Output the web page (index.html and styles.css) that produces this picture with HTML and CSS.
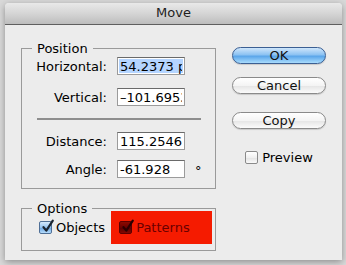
FILE: index.html
```html
<!DOCTYPE html>
<html>
<head>
<meta charset="utf-8">
<link rel="stylesheet" href="styles.css">
</head>
<body>
<div class="window">
  <div class="titlebar">Move</div>
  <div class="content">
    <div class="left">
      <fieldset class="group position">
        <legend>Position</legend>
        <div class="row r1"><label>Horizontal:</label><input class="field selected" value="54.2373 pt"></div>
        <div class="row r2"><label>Vertical:</label><input class="field" value="–101.6953 pt"></div>
        <div class="sep"></div>
        <div class="row r3"><label>Distance:</label><input class="field" value="115.2546 pt"></div>
        <div class="row r4"><label>Angle:</label><input class="field" value="-61.928"><span class="deg">°</span></div>
      </fieldset>
      <fieldset class="group options">
        <legend>Options</legend>
        <div class="optrow">
          <span class="check blue"><svg width="16" height="16" viewBox="0 0 16 16"><path d="M3.5 8.2 L6.3 11.6 L12.8 1.6" fill="none" stroke="#1c2530" stroke-width="2.2" stroke-linecap="round" stroke-linejoin="round"/></svg></span>
          <span class="opt">Objects</span>
          <div class="mark">
            <span class="check red"><svg width="16" height="16" viewBox="0 0 16 16"><path d="M3.5 8.2 L6.3 11.6 L12.8 1.6" fill="none" stroke="#2a0000" stroke-width="2.2" stroke-linecap="round" stroke-linejoin="round"/></svg></span>
            <span class="opt redtext">Patterns</span>
          </div>
        </div>
      </fieldset>
    </div>
    <div class="right">
      <button class="btn ok">OK</button>
      <button class="btn cancel">Cancel</button>
      <button class="btn copy">Copy</button>
      <div class="preview"><span class="check plain"></span><span class="opt">Preview</span></div>
    </div>
  </div>
</div>
</body>
</html>
```
FILE: styles.css
```css
html, body {
  margin: 0;
  padding: 0;
}
body {
  background: #d9d9d9;
  width: 346px;
  height: 265px;
  overflow: hidden;
  font-family: "DejaVu Sans", sans-serif;
  font-size: 13px;
  color: #000;
}
.window {
  margin: 3px 0 0 5px;
  width: 337px;
  height: 257px;
  background: #ececec;
  box-shadow: 0 2px 7px rgba(0,0,0,0.35);
  border-radius: 4px 4px 0 0;
  overflow: hidden;
}
.titlebar {
  height: 21px;
  line-height: 20px;
  text-align: center;
  color: #1e1e1e;
  background: linear-gradient(#e9e9e9, #d5d5d5 50%, #bdbdbd);
  border-bottom: 1px solid #5f5f5f;
}
.content {
  display: flex;
  gap: 16px;
  padding: 16px 16px 0 16px;
}
.left {
  width: 195px;
  display: flex;
  flex-direction: column;
  gap: 12px;
}
.group {
  margin: 0;
  border: 1px solid #9a9a9a;
  padding: 1px 0 10px 0;
  min-width: 0;
}
.group legend {
  margin-left: 10px;
  padding: 0 5px;
  line-height: 15px;
  height: 15px;
}
.row {
  display: flex;
  align-items: center;
  height: 18px;
}
.row label {
  width: 85px;
  text-align: right;
  margin-right: 10px;
}
.r2 { margin-top: 13px; }
.r3 { margin-top: 12px; }
.r4 { margin-top: 10px; }
.sep {
  margin: 12px 14px 0 15px;
  height: 2px;
  background: #8e8e8e;
}
.field {
  width: 68px;
  height: 18px;
  box-sizing: border-box;
  border: 1px solid #9b9b9b;
  border-top-color: #6a6a6a;
  padding: 0 2px;
  margin: 0;
  font-family: "DejaVu Sans", sans-serif;
  font-size: 13px;
  color: #000;
  background: #fff;
  outline: none;
}
.field.selected {
  background: #b5d5ff;
  box-shadow: inset 0 0 0 1px #fff;
}
.deg {
  margin-left: 10px;
  font-size: 13px;
  position: relative;
  top: 1px;
}
.options {
  padding-bottom: 15px;
}
.optrow {
  display: flex;
  align-items: center;
  height: 15px;
  margin-top: 3px;
  padding-left: 17px;
}
.check {
  width: 13px;
  height: 13px;
  box-sizing: border-box;
  border-radius: 2px;
  display: inline-block;
  position: relative;
  flex: none;
}
.check svg {
  position: absolute;
  left: 0;
  top: -3px;
}
.check.blue {
  border: 1px solid #4f6f96;
  background: linear-gradient(#d6eafc, #94c3f0 50%, #6ea9e6 55%, #b6dcfb);
}
.check.red {
  border: 1px solid #5a0000;
  background: linear-gradient(#8c0a00, #6a0000 50%, #5a0000 55%, #820800);
}
.check.plain {
  border: 1px solid #8a8a8a;
  background: linear-gradient(#ffffff, #f0f0f0 50%, #e4e4e4 55%, #fafafa);
}
.opt {
  margin-left: 4px;
}
.mark {
  margin-left: 6px;
  height: 33px;
  width: 101px;
  flex: none;
  background: #f51b00;
  display: flex;
  align-items: center;
  padding-left: 8px;
  box-sizing: border-box;
}
.redtext {
  color: #6b0000;
}
.right {
  width: 94px;
  display: flex;
  flex-direction: column;
  align-items: center;
}
.btn {
  width: 94px;
  height: 17px;
  box-sizing: border-box;
  border: 1px solid #8a8a8a;
  border-radius: 9px;
  font-family: "DejaVu Sans", sans-serif;
  font-size: 13px;
  color: #111;
  padding: 0;
  line-height: 15px;
  background: linear-gradient(#ffffff, #f4f4f4 50%, #e6e6e6 55%, #fbfbfb);
  box-shadow: 0 1px 1px rgba(0,0,0,0.15);
}
.ok {
  margin-top: 6px;
  border-color: #3b5f93;
  background: linear-gradient(#cfe6fb, #8cc2f2 45%, #5ba6ea 55%, #a9dcfd);
}
.cancel { margin-top: 13px; }
.copy { margin-top: 18px; }
.preview {
  margin-top: 21px;
  display: flex;
  align-items: center;
}
```
